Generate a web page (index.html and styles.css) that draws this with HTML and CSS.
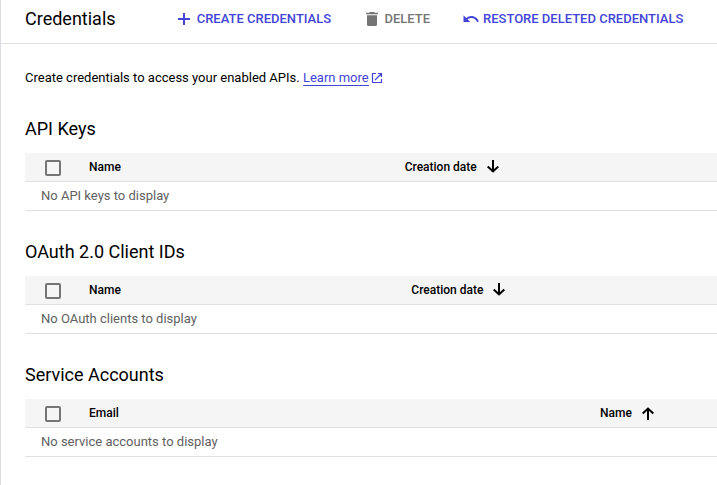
FILE: index.html
```html
<!DOCTYPE html>
<html lang="en">
<head>
<meta charset="utf-8">
<title>Credentials</title>
<link rel="stylesheet" href="styles.css">
</head>
<body>
<div class="page">
  <header class="toolbar">
    <h1 class="title">Credentials</h1>
    <button class="action create"><svg class="icon" viewBox="0 0 18 18"><path d="M9 3v12M3 9h12" stroke="currentColor" stroke-width="2" fill="none"/></svg><span>CREATE CREDENTIALS</span></button>
    <button class="action delete"><svg class="icon" viewBox="0 0 18 18"><path d="M5 5.300h10v9.200a1.500 1.500 0 0 1-1.500 1.500h-7a1.500 1.500 0 0 1-1.500-1.500zM4 2.800h3l1-.8h4l1 .8h3v1.500H4z" fill="currentColor"/></svg><span>DELETE</span></button>
    <button class="action restore"><svg class="icon" viewBox="0 0 24 24"><path d="M12.500 8c-2.650 0-5.050.99-6.900 2.600L2 7v9h9l-3.620-3.620c1.390-1.160 3.160-1.880 5.120-1.880 3.540 0 6.550 2.310 7.600 5.500l2.370-.78C21.080 11.030 17.150 8 12.500 8z" fill="currentColor"/></svg><span>RESTORE DELETED CREDENTIALS</span></button>
  </header>
  <main class="content">
    <p class="intro">Create credentials to access your enabled APIs. <a class="learn"><span class="learn-text">Learn more</span><svg class="external" viewBox="0 0 12 12"><path d="M5 1.500H1.500v9h9V7M7 1.500h3.500V5M10.500 1.500L4 8" stroke="currentColor" stroke-width="1.200" fill="none"/></svg></a></p>
    <section class="group">
      <h2>API Keys</h2>
      <div class="head api"><span class="box"></span><span>Name</span><span class="sort">Creation date<svg class="arrow" viewBox="0 0 16 16"><path d="M8 1v12M2.700 7.500L8 12.500l5.300-5" stroke="currentColor" stroke-width="2" fill="none"/></svg></span></div>
      <div class="empty">No API keys to display</div>
    </section>
    <section class="group">
      <h2>OAuth 2.0 Client IDs</h2>
      <div class="head oauth"><span class="box"></span><span>Name</span><span class="sort">Creation date<svg class="arrow" viewBox="0 0 16 16"><path d="M8 1v12M2.700 7.500L8 12.500l5.300-5" stroke="currentColor" stroke-width="2" fill="none"/></svg></span></div>
      <div class="empty">No OAuth clients to display</div>
    </section>
    <section class="group">
      <h2>Service Accounts</h2>
      <div class="head service"><span class="box"></span><span>Email</span><span class="sort">Name<svg class="arrow" viewBox="0 0 16 16"><path d="M8 15V3M2.700 8.500L8 3.500l5.300 5" stroke="currentColor" stroke-width="2" fill="none"/></svg></span></div>
      <div class="empty">No service accounts to display</div>
    </section>
  </main>
</div>
</body>
</html>
```
FILE: styles.css
```css
* { box-sizing: border-box; }
body { margin: 0; background: #fff; color: #000; font: 13px/20px Roboto, sans-serif; overflow: hidden; }
.page { height: 485px; border-left: 1px solid #dadce0; }
.toolbar { display: flex; align-items: center; height: 44px; padding: 0 0 6px 24px; border-bottom: 1px solid #e0e0e0; white-space: nowrap; }
.title { width: 150px; margin: 0; font-size: 18px; font-weight: 400; line-height: 24px; }
.action { display: flex; flex: none; align-items: center; padding: 0; border: 0; background: none; color: #4245d8; font: 500 13px/20px Roboto, sans-serif; }
.icon { width: 18px; height: 18px; margin-right: 4px; }
.create { width: 187px; }
.create .icon { margin-right: 3.700px; }
.delete { width: 99.500px; color: #757575; }
.delete .icon { margin-right: 4.500px; }
.restore .icon { margin-right: 3.500px; }
.content { padding: 24px 0 0 24px; }
.intro { margin: 0; }
.learn { color: #4245d8; }
.learn-text { border-bottom: 1px solid; }
.external { width: 12px; height: 12px; margin-left: 2px; vertical-align: -2px; }
.group { height: 123px; padding-top: 29px; }
h2 { margin: 0; font-size: 18px; font-weight: 400; line-height: 24px; }
.head { display: grid; align-items: center; height: 29px; margin-top: 12px; padding-left: 20px; border-bottom: 1px solid #e0e0e0; background: #f5f5f5; font-size: 12px; font-weight: 500; white-space: nowrap; }
.api { grid-template-columns: 44px 315.700px 1fr; }
.oauth { grid-template-columns: 44px 322.300px 1fr; }
.service { grid-template-columns: 44px 511px 1fr; }
.box { width: 16px; height: 16px; margin-top: 2px; border: 2px solid #757575; border-radius: 2px; }
.sort { display: flex; align-items: center; }
.arrow { width: 16px; height: 16px; margin-left: 8px; }
.empty { height: 29px; padding: 4px 0 0 16px; border-bottom: 1px solid #e0e0e0; color: #616161; }
```
